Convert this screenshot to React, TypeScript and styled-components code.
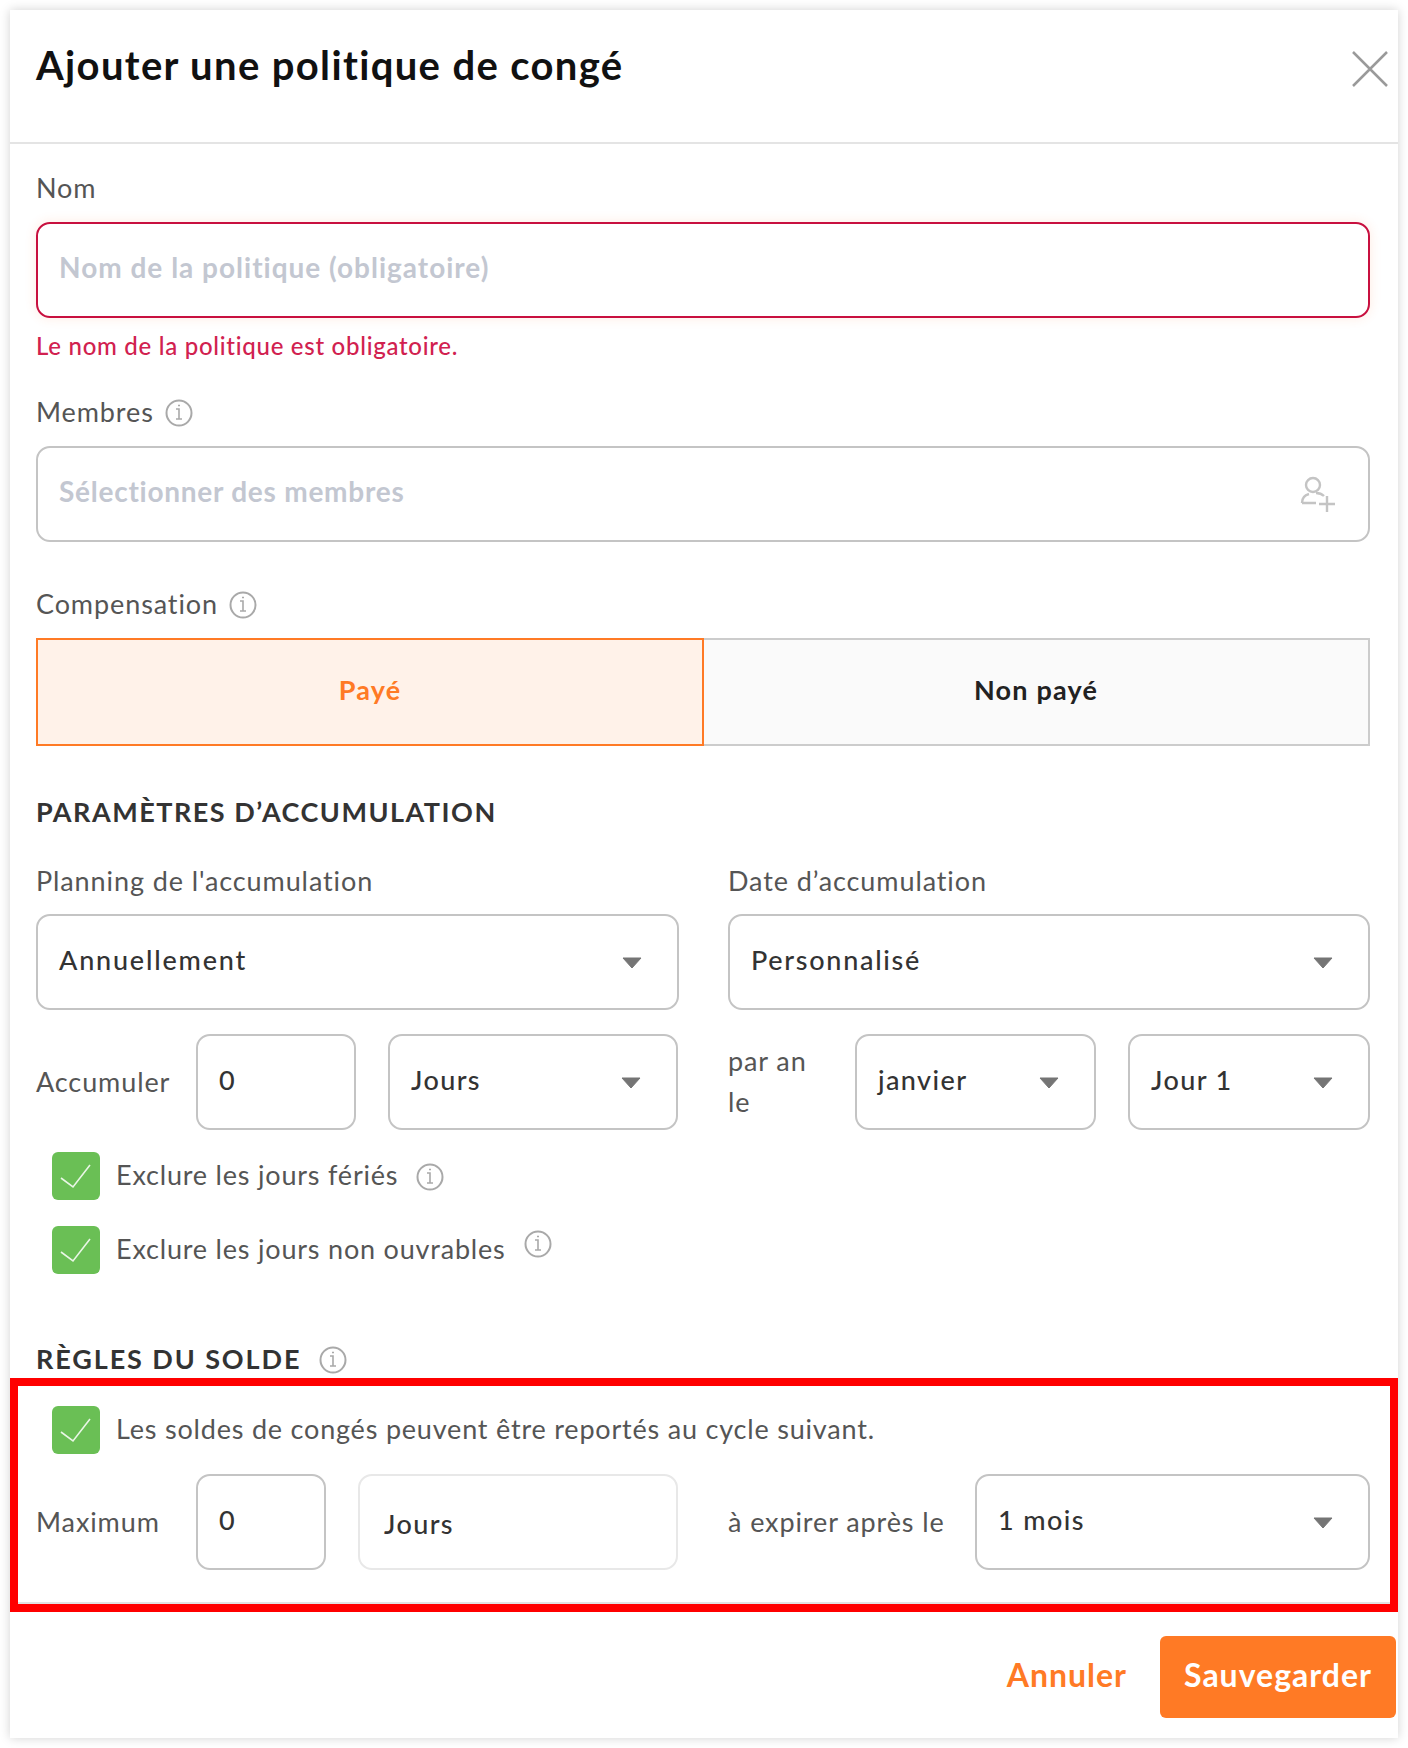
import * as React from 'react'
import styled, { createGlobalStyle } from 'styled-components'

const GlobalStyle = createGlobalStyle`
  html, body {
    margin: 0;
    background: #fff;
  }
  * {
    box-sizing: border-box;
  }
`

const Panel = styled.div`
  position: relative;
  width: 1388px;
  height: 1728px;
  margin: 10px;
  background: #fff;
  box-shadow: 0 0 10px rgba(0, 0, 0, 0.18);
  font-family: 'Lato', 'Noto Sans', sans-serif;
  font-size: 27px;
  letter-spacing: 0.8px;
  color: #555;
`

const Header = styled.div`
  display: flex;
  justify-content: space-between;
  height: 134px;
  padding: 40px 10px 0 26px;
  border-bottom: 2px solid #e4e4e4;
`

const Title = styled.h1`
  margin: 0;
  font-size: 40px;
  line-height: 30px;
  font-weight: 700;
  letter-spacing: 1.35px;
  color: #111;
`

const Body = styled.div`
  height: 1460px;
  padding: 30px 28px 0 26px;
  border-bottom: 2px solid #e2e2e2;
`

const Label = styled.div<{ $top?: number; $bottom?: number }>`
  display: flex;
  align-items: center;
  gap: 11px;
  height: 30px;
  padding-bottom: 4px;
  margin-top: ${(p) => p.$top ?? 0}px;
  margin-bottom: ${(p) => p.$bottom ?? 0}px;
  white-space: nowrap;
  letter-spacing: 0.9px;
`

const SectionTitle = styled(Label)<{ $spread?: number }>`
  gap: 18px;
  font-weight: 700;
  letter-spacing: ${(p) => p.$spread ?? 1.5}px;
  color: #333;
`

const Field = styled.div<{ $error?: boolean; $width?: number; $light?: boolean; $spread?: number }>`
  position: relative;
  display: flex;
  align-items: center;
  flex: ${(p) => (p.$width ? `0 0 ${p.$width}px` : '1')};
  height: 96px;
  padding: ${(p) => (p.$light ? '2px 22px 0 24px' : '0 22px 6px 21px')};
  border: 2px solid ${(p) => (p.$error ? '#c8103f' : p.$light ? '#e8e8e8' : '#c4c4c4')};
  border-radius: 14px;
  color: #333;
  font-weight: 500;
  letter-spacing: ${(p) => p.$spread ?? 1.4}px;
  box-shadow: ${(p) => (p.$error ? '0 0 12px rgba(255, 110, 50, 0.14)' : 'none')};
`

const Placeholder = styled.span<{ $spread?: number }>`
  color: #c3c7d1;
  font-size: 28px;
  font-weight: 700;
  letter-spacing: ${(p) => p.$spread ?? 1}px;
`

const ErrorText = styled.div`
  height: 30px;
  margin-top: 13px;
  font-size: 24px;
  line-height: 30px;
  font-weight: 500;
  letter-spacing: 0.72px;
  color: #d1214f;
`

const Toggle = styled.div`
  display: flex;
  height: 108px;
`

const ToggleOption = styled.div<{ $active?: boolean }>`
  display: flex;
  flex: ${(p) => (p.$active ? '0 0 668px' : '1')};
  align-items: center;
  justify-content: center;
  padding-bottom: 6px;
  border: 2px solid ${(p) => (p.$active ? '#ff7a25' : '#cccccc')};
  border-left-width: ${(p) => (p.$active ? 2 : 0)}px;
  background: ${(p) => (p.$active ? '#fff2e9' : '#fafafa')};
  color: ${(p) => (p.$active ? '#ff7a25' : '#222')};
  font-weight: 700;
  letter-spacing: 1.2px;
`

const Columns = styled.div`
  display: grid;
  grid-template-columns: 643px 642px;
  gap: 49px;
`

const Row = styled.div<{ $top?: number }>`
  display: flex;
  align-items: center;
  margin-top: ${(p) => p.$top ?? 0}px;
`

const RowLabel = styled.div<{ $width: number; $wrapAt?: number }>`
  flex: 0 0 ${(p) => p.$width}px;
  padding-right: ${(p) => p.$wrapAt ?? 0}px;
  padding-bottom: 2px;
  line-height: 41px;
  letter-spacing: 0.9px;
`

const Spacer = styled.div<{ $width: number }>`
  flex: 0 0 ${(p) => p.$width}px;
`

const CheckRow = styled.div<{ $top: number }>`
  display: flex;
  align-items: center;
  gap: 16px;
  margin-top: ${(p) => p.$top}px;
  padding-left: 16px;
`

const CheckBox = styled.div`
  flex: 0 0 48px;
  height: 48px;
  border-radius: 6px;
  background: #6abf55;
`

const CheckText = styled.span`
  margin-bottom: 4px;
`

const CheckHint = styled(CheckText)`
  margin-right: 2px;
`

const Footer = styled.div`
  display: flex;
  align-items: center;
  justify-content: flex-end;
  gap: 33px;
  padding: 32px 2px 0 0;
`

const CancelButton = styled.div`
  padding-bottom: 6px;
  color: #ff7a25;
  font-size: 32px;
  font-weight: 700;
  letter-spacing: 1px;
`

const SaveButton = styled.div`
  display: flex;
  align-items: center;
  justify-content: center;
  width: 236px;
  height: 82px;
  padding-bottom: 6px;
  border-radius: 6px;
  background: #ff7a25;
  color: #fff;
  font-size: 32px;
  font-weight: 700;
  letter-spacing: 1px;
`

const CloseButton = styled.svg`
  width: 36px;
  height: 36px;
  margin-top: 1px;
`

const CaretIcon = styled.svg`
  position: absolute;
  right: 35px;
  top: 41px;
  width: 20px;
  height: 12px;
`

const UserPlus = styled.svg`
  position: absolute;
  right: 32px;
  top: 28px;
  width: 36px;
  height: 37px;
`

const InfoSvg = styled.svg<{ $offset: number }>`
  flex: 0 0 28px;
  margin-top: ${(p) => p.$offset}px;
`

const Highlight = styled.div`
  position: absolute;
  left: 0;
  top: 1368px;
  width: 100%;
  height: 234px;
  border: 8px solid #ff0000;
  pointer-events: none;
`

const InfoIcon: React.FC<{ offset?: number }> = ({ offset = 4 }) => (
  <InfoSvg $offset={offset} width="28" height="28" viewBox="0 0 28 28" fill="none" stroke="#a9a9a9" strokeWidth="2">
    <circle cx="14" cy="14" r="12.500" />
    <path d="M11 10h3v9.500M11 20h6" strokeWidth="1.6" />
    <path d="M13 6.500h2" strokeWidth="1.6" />
  </InfoSvg>
)

const Caret: React.FC = () => (
  <CaretIcon viewBox="0 0 20 12">
    <path d="M1 1h18L10 11z" fill="#757575" stroke="#757575" strokeWidth="1" strokeLinejoin="round" />
  </CaretIcon>
)

const Check: React.FC = () => (
  <CheckBox>
    <svg width="48" height="48" viewBox="0 0 48 48" fill="none">
      <path d="M9 26l12 9L38 13" stroke="#fff" strokeWidth="1.6" opacity="0.85" />
    </svg>
  </CheckBox>
)

const App: React.FC = () => (
  <>
    <GlobalStyle />
    <Panel>
      <Header>
        <Title>Ajouter une politique de congé</Title>
        <CloseButton viewBox="0 0 36 36" fill="none" stroke="#9a9a9a" strokeWidth="2.500">
          <path d="M1 1l34 34M35 1L1 35" />
        </CloseButton>
      </Header>
      <Body>
        <Label $bottom={18}>Nom</Label>
        <Field $error>
          <Placeholder>Nom de la politique (obligatoire)</Placeholder>
        </Field>
        <ErrorText>Le nom de la politique est obligatoire.</ErrorText>

        <Label $top={37} $bottom={18}>
          Membres <InfoIcon />
        </Label>
        <Field>
          <Placeholder $spread={0.75}>Sélectionner des membres</Placeholder>
          <UserPlus viewBox="0 0 36 37" fill="none" stroke="#c4c4c4" strokeWidth="2.400">
            <circle cx="13" cy="9" r="7" />
            <path d="M2 27c0-5 3-8 7-9M2 27h14M16 17c3 0 6 1 8 3" />
            <path d="M27 20v16M19 28h16" />
          </UserPlus>
        </Field>

        <Label $top={48} $bottom={18}>
          Compensation <InfoIcon />
        </Label>
        <Toggle>
          <ToggleOption $active>Payé</ToggleOption>
          <ToggleOption>Non payé</ToggleOption>
        </Toggle>

        <SectionTitle $top={52}>PARAMÈTRES D’ACCUMULATION</SectionTitle>
        <Columns>
          <div>
            <Label $top={39} $bottom={17}>Planning de l'accumulation</Label>
            <Field $spread={1.8}>
              Annuellement
              <Caret />
            </Field>
          </div>
          <div>
            <Label $top={39} $bottom={17}>Date d’accumulation</Label>
            <Field $spread={1.7}>
              Personnalisé
              <Caret />
            </Field>
          </div>
        </Columns>

        <Row $top={24}>
          <RowLabel $width={160}>Accumuler</RowLabel>
          <Field $width={160}>0</Field>
          <Spacer $width={32} />
          <Field $width={290}>
            Jours
            <Caret />
          </Field>
          <Spacer $width={50} />
          <RowLabel $width={127} $wrapAt={40}>par an le</RowLabel>
          <Field $width={241}>
            janvier
            <Caret />
          </Field>
          <Spacer $width={32} />
          <Field>
            Jour 1
            <Caret />
          </Field>
        </Row>

        <CheckRow $top={22}>
          <Check />
          <CheckHint>Exclure les jours fériés</CheckHint>
          <InfoIcon offset={2} />
        </CheckRow>
        <CheckRow $top={26}>
          <Check />
          <CheckHint>Exclure les jours non ouvrables</CheckHint>
          <InfoIcon offset={-12} />
        </CheckRow>

        <SectionTitle $top={71} $spread={1.9}>
          RÈGLES DU SOLDE <InfoIcon />
        </SectionTitle>
        <CheckRow $top={31}>
          <Check />
          <CheckText>Les soldes de congés peuvent être reportés au cycle suivant.</CheckText>
        </CheckRow>
        <Row $top={20}>
          <RowLabel $width={160}>Maximum</RowLabel>
          <Field $width={130}>0</Field>
          <Spacer $width={32} />
          <Field $width={320} $light>Jours</Field>
          <Spacer $width={50} />
          <RowLabel $width={247}>à expirer après le</RowLabel>
          <Field>
            1 mois
            <Caret />
          </Field>
        </Row>
      </Body>
      <Footer>
        <CancelButton>Annuler</CancelButton>
        <SaveButton>Sauvegarder</SaveButton>
      </Footer>
      <Highlight />
    </Panel>
  </>
)

export default App
